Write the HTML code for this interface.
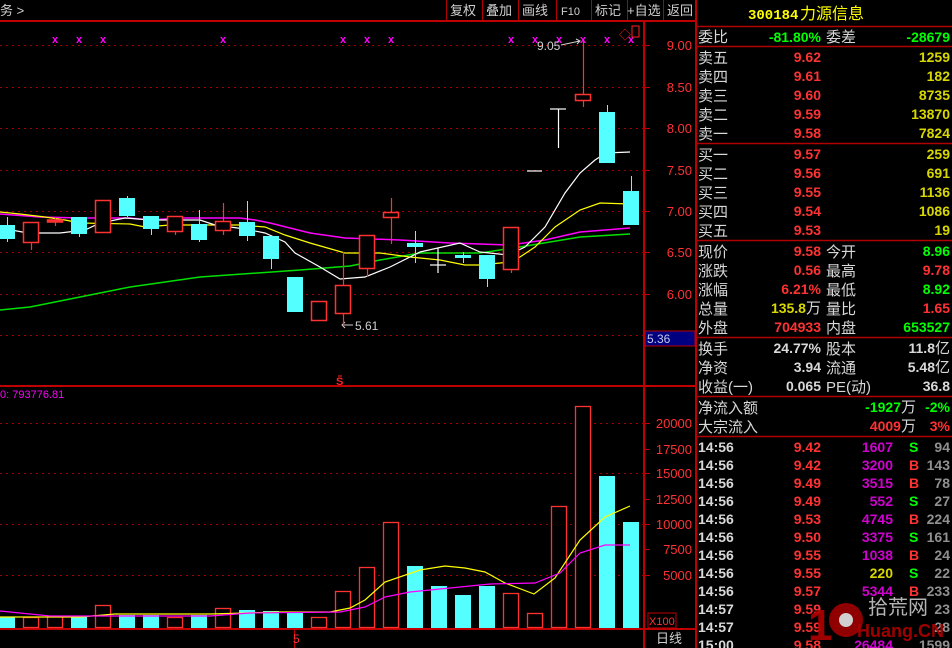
<!DOCTYPE html>
<html><head><meta charset="utf-8"><style>
html,body{margin:0;padding:0;background:#000;width:952px;height:648px;overflow:hidden}
svg{display:block}
text{font-family:"Liberation Sans","Noto Sans CJK SC",sans-serif}
.cj{font-family:"Liberation Sans","Noto Sans CJK SC",sans-serif;font-size:15px;fill:#d8d8d8}
.n{font-family:"Liberation Mono","Liberation Sans",monospace;font-weight:bold;font-size:14px}
.ax{font-family:"Liberation Sans",sans-serif;font-size:13px;fill:#ff3232}
</style></head><body>
<svg width="952" height="648" viewBox="0 0 952 648" xmlns="http://www.w3.org/2000/svg">
<rect width="952" height="648" fill="#000"/>
<text x="0" y="15" fill="#cfcfcf" font-size="13">务 &gt;</text>
<g stroke="#b00000" stroke-width="1">
<line x1="446.5" y1="0" x2="446.5" y2="20"/><line x1="482.5" y1="0" x2="482.5" y2="20"/><line x1="518.5" y1="0" x2="518.5" y2="20"/><line x1="556.5" y1="0" x2="556.5" y2="20"/><line x1="591.5" y1="0" x2="591.5" y2="20"/><line x1="627.5" y1="0" x2="627.5" y2="20"/><line x1="663.5" y1="0" x2="663.5" y2="20"/>
</g>
<g fill="#d0d0d0" font-size="13">
<text x="450" y="15">复权</text><text x="486" y="15">叠加</text><text x="522" y="15">画线</text><text x="561" y="15" font-size="11">F10</text><text x="595" y="15">标记</text><text x="627" y="15">+自选</text><text x="667" y="15">返回</text>
</g>
<g stroke="#c00000" stroke-width="2">
<line x1="0" y1="21" x2="696" y2="21"/>
<line x1="644" y1="21" x2="644" y2="648"/>
<line x1="0" y1="386" x2="696" y2="386"/>
<line x1="0" y1="629" x2="696" y2="629"/>
<line x1="696" y1="0" x2="696" y2="648"/>
</g>
<line x1="294.5" y1="629" x2="294.5" y2="648" stroke="#c00000"/>
<g stroke="#a00000" stroke-dasharray="2,4" stroke-width="1">
<line x1="0" y1="45.5" x2="644" y2="45.5"/><line x1="0" y1="87.5" x2="644" y2="87.5"/><line x1="0" y1="128.5" x2="644" y2="128.5"/><line x1="0" y1="170.5" x2="644" y2="170.5"/><line x1="0" y1="211.5" x2="644" y2="211.5"/><line x1="0" y1="252.5" x2="644" y2="252.5"/><line x1="0" y1="294.5" x2="644" y2="294.5"/><line x1="0" y1="335.5" x2="644" y2="335.5"/>
<line x1="0" y1="423.5" x2="644" y2="423.5"/><line x1="0" y1="473.5" x2="644" y2="473.5"/><line x1="0" y1="524.5" x2="644" y2="524.5"/><line x1="0" y1="575.5" x2="644" y2="575.5"/>
</g>
<g stroke="#c00000">
<line x1="644" y1="45.5" x2="650" y2="45.5"/><line x1="644" y1="87.5" x2="650" y2="87.5"/><line x1="644" y1="128.5" x2="650" y2="128.5"/><line x1="644" y1="170.5" x2="650" y2="170.5"/><line x1="644" y1="211.5" x2="650" y2="211.5"/><line x1="644" y1="252.5" x2="650" y2="252.5"/><line x1="644" y1="294.5" x2="650" y2="294.5"/>
<line x1="644" y1="423.5" x2="650" y2="423.5"/><line x1="644" y1="449.5" x2="650" y2="449.5"/><line x1="644" y1="473.5" x2="650" y2="473.5"/><line x1="644" y1="499.5" x2="650" y2="499.5"/><line x1="644" y1="524.5" x2="650" y2="524.5"/><line x1="644" y1="549.5" x2="650" y2="549.5"/><line x1="644" y1="575.5" x2="650" y2="575.5"/>
</g>
<g class="ax" text-anchor="end">
<text x="692" y="50">9.00</text><text x="692" y="92">8.50</text><text x="692" y="133">8.00</text><text x="692" y="175">7.50</text><text x="692" y="216">7.00</text><text x="692" y="257">6.50</text><text x="692" y="299">6.00</text>
<text x="692" y="428">20000</text><text x="692" y="454">17500</text><text x="692" y="478">15000</text><text x="692" y="504">12500</text><text x="692" y="529">10000</text><text x="692" y="554">7500</text><text x="692" y="580">5000</text>
</g>
<rect x="645" y="331" width="50" height="15" fill="#000080" stroke="#c00000"/>
<text x="647" y="343" fill="#c8c8e8" font-size="12">5.36</text>
<rect x="648" y="613" width="28" height="15" fill="none" stroke="#c00000"/>
<text x="649" y="625" fill="#ff3232" font-size="11">X100</text>
<text x="656" y="643" fill="#d0d0d0" font-size="13">日线</text>
<text x="293" y="643" fill="#ff3232" font-size="12">5</text>
<text x="336" y="385" fill="#ff2020" font-size="11" font-weight="bold">S</text>
<line x1="338" y1="376" x2="342" y2="376" stroke="#ff2020"/>
<text x="0" y="398" fill="#ff00ff" font-size="11">0: 793776.81</text>
<g fill="#ff00ff" font-size="11" font-weight="bold" text-anchor="middle">
<text x="55" y="43">x</text><text x="79" y="43">x</text><text x="103" y="43">x</text><text x="223" y="43">x</text><text x="343" y="43">x</text><text x="367" y="43">x</text><text x="391" y="43">x</text><text x="511" y="43">x</text><text x="535" y="43">x</text><text x="559" y="43">x</text><text x="583" y="43">x</text><text x="607" y="43">x</text><text x="631" y="43">x</text>
</g>
<text x="619" y="39" fill="#ff2020" font-size="12">◇</text>
<rect x="632" y="26" width="7" height="11" fill="none" stroke="#ff2020"/>
<text x="537" y="50" fill="#d0d0d0" font-size="12">9.05</text>
<path d="M561 45 L580 41 M576 39 L580 41 L577 44" stroke="#d0d0d0" fill="none"/>
<text x="355" y="330" fill="#d0d0d0" font-size="12">5.61</text>
<path d="M353 325 L342 325 M345 322 L342 325 L345 328" stroke="#d0d0d0" fill="none"/>
<polyline fill="none" stroke="#00e000" stroke-width="1.5" points="0,310 30,307 80,297 130,287 200,277 300,270 350,266 380,260 420,253 480,253 520,247 580,237 630,234"/>
<polyline fill="none" stroke="#ff00ff" stroke-width="1.5" points="0,214 40,217 80,218 130,218 150,220 180,218 240,218 255,220 270,223 310,233 345,238 400,240 450,243 510,245 545,240 580,232 630,228"/>
<polyline fill="none" stroke="#ffff00" stroke-width="1.2" points="0,212 20,214 45,217 65,220 80,223 130,224 145,227 170,225 240,225 265,227 285,235 310,243 345,253 380,253 410,257 440,260 465,265 480,265 510,262 520,257 535,247 555,227 580,210 600,203 630,204"/>
<polyline fill="none" stroke="#ffffff" stroke-width="1.2" points="0,228 28,233 60,233 85,230 100,223 125,218 150,220 200,220 215,225 245,229 265,233 285,242 295,253 320,267 340,279 365,277 390,267 420,252 460,243 480,252 508,255 525,247 545,227 565,193 580,173 595,160 606,153 630,152"/>
<g stroke="#54ffff" stroke-width="1">
<line x1="7.5" y1="217" x2="7.5" y2="242"/><line x1="79.5" y1="217" x2="79.5" y2="237"/><line x1="127.5" y1="196" x2="127.5" y2="217"/><line x1="151.5" y1="216" x2="151.5" y2="235"/><line x1="199.5" y1="210" x2="199.5" y2="242"/><line x1="247.5" y1="201" x2="247.5" y2="241"/><line x1="271.5" y1="236" x2="271.5" y2="269"/><line x1="415.5" y1="231" x2="415.5" y2="263"/><line x1="463.5" y1="252" x2="463.5" y2="263"/><line x1="487.5" y1="255" x2="487.5" y2="287"/><line x1="607.5" y1="105" x2="607.5" y2="113"/><line x1="631.5" y1="176" x2="631.5" y2="191"/>
</g>
<g fill="#54ffff">
<rect x="-1" y="225" width="16" height="14"/><rect x="71" y="217" width="16" height="17"/><rect x="119" y="198" width="16" height="18"/><rect x="143" y="216" width="16" height="13"/><rect x="191" y="224" width="16" height="16"/><rect x="239" y="222" width="16" height="14"/><rect x="263" y="236" width="16" height="23"/><rect x="287" y="277" width="16" height="35"/><rect x="407" y="243" width="16" height="4"/><rect x="455" y="255" width="16" height="3"/><rect x="479" y="255" width="16" height="24"/><rect x="599" y="112" width="16" height="51"/><rect x="623" y="191" width="16" height="34"/>
</g>
<g stroke="#ff3232" stroke-width="1.2">
<line x1="31.5" y1="242" x2="31.5" y2="250"/><line x1="55.5" y1="218" x2="55.5" y2="226"/><line x1="175.5" y1="231" x2="175.5" y2="235"/><line x1="223.5" y1="203" x2="223.5" y2="235"/><line x1="343.5" y1="252" x2="343.5" y2="326"/><line x1="367.5" y1="268" x2="367.5" y2="277"/><line x1="391.5" y1="198" x2="391.5" y2="244"/><line x1="511.5" y1="269" x2="511.5" y2="273"/><line x1="583.5" y1="40" x2="583.5" y2="107"/>
</g>
<g fill="#000" stroke="#ff3232" stroke-width="1.5">
<rect x="23.5" y="222.5" width="15" height="20"/><rect x="47.5" y="220" width="15" height="2" fill="#ff3232"/><rect x="95.5" y="200.5" width="15" height="32"/><rect x="167.5" y="216.5" width="15" height="15"/><rect x="215.5" y="221.5" width="15" height="9"/><rect x="311.5" y="301.5" width="15" height="19"/><rect x="335.5" y="285.5" width="15" height="28"/><rect x="359.5" y="235.5" width="15" height="33"/><rect x="383.5" y="212.5" width="15" height="5"/><rect x="503.5" y="227.5" width="15" height="42"/><rect x="575.5" y="94.5" width="15" height="6"/>
</g>
<g stroke="#fff" stroke-width="1.2">
<line x1="430" y1="265" x2="446" y2="265"/><line x1="438" y1="248" x2="438" y2="273"/>
<line x1="527" y1="171" x2="542" y2="171"/>
<line x1="550" y1="109" x2="566" y2="109"/><line x1="558.5" y1="109" x2="558.5" y2="148"/>
</g>
<g fill="#54ffff">
<rect x="-1" y="617" width="16" height="11"/><rect x="71" y="617" width="16" height="11"/><rect x="119" y="615" width="16" height="13"/><rect x="143" y="615" width="16" height="13"/><rect x="191" y="615" width="16" height="13"/><rect x="239" y="610" width="16" height="18"/><rect x="263" y="611" width="16" height="17"/><rect x="287" y="613" width="16" height="15"/><rect x="407" y="566" width="16" height="62"/><rect x="431" y="586" width="16" height="42"/><rect x="455" y="595" width="16" height="33"/><rect x="479" y="586" width="16" height="42"/><rect x="599" y="476" width="16" height="152"/><rect x="623" y="522" width="16" height="106"/>
</g>
<g fill="#000" stroke="#ff3232" stroke-width="1.3">
<rect x="23.5" y="617.5" width="15" height="10"/><rect x="47.5" y="616.5" width="15" height="11"/><rect x="95.5" y="605.5" width="15" height="22"/><rect x="167.5" y="617.5" width="15" height="10"/><rect x="215.5" y="608.5" width="15" height="19"/><rect x="311.5" y="617.5" width="15" height="10"/><rect x="335.5" y="591.5" width="15" height="36"/><rect x="359.5" y="567.5" width="15" height="60"/><rect x="383.5" y="522.5" width="15" height="105"/><rect x="503.5" y="593.5" width="15" height="34"/><rect x="527.5" y="613.5" width="15" height="14"/><rect x="551.5" y="506.5" width="15" height="121"/><rect x="575.5" y="406.5" width="15" height="221"/>
</g>
<polyline fill="none" stroke="#ffff00" stroke-width="1.2" points="0,617 80,617 115,614 210,614 280,612 330,612 350,608 365,600 385,582 420,570 445,566 465,568 485,572 505,583 534,594 555,578 580,540 605,517 630,506"/>
<polyline fill="none" stroke="#ff00ff" stroke-width="1.2" points="0,611 50,616 210,616 250,613 340,612 365,607 385,597 410,592 450,588 490,584 535,583 560,573 580,553 605,545 630,545"/>
<g stroke="#b00000" stroke-width="1.5">
<line x1="696" y1="26.5" x2="952" y2="26.5"/><line x1="696" y1="46.5" x2="952" y2="46.5"/><line x1="696" y1="143.5" x2="952" y2="143.5"/><line x1="696" y1="240.5" x2="952" y2="240.5"/><line x1="696" y1="337.5" x2="952" y2="337.5"/><line x1="696" y1="396.5" x2="952" y2="396.5"/><line x1="696" y1="436.5" x2="952" y2="436.5"/>
</g>
<text x="748" y="19" fill="#ffff00" class="n" font-size="14">300184</text>
<text x="800" y="19" fill="#ffff00" font-size="16">力源信息</text>
<g class="cj">
<text x="698" y="42">委比</text><text x="826" y="42">委差</text>
<text x="698" y="63">卖五</text><text x="698" y="82">卖四</text><text x="698" y="101">卖三</text><text x="698" y="120">卖二</text><text x="698" y="139">卖一</text>
<text x="698" y="160">买一</text><text x="698" y="179">买二</text><text x="698" y="198">买三</text><text x="698" y="217">买四</text><text x="698" y="236">买五</text>
<text x="698" y="257">现价</text><text x="826" y="257">今开</text>
<text x="698" y="276">涨跌</text><text x="826" y="276">最高</text>
<text x="698" y="295">涨幅</text><text x="826" y="295">最低</text>
<text x="698" y="314">总量</text><text x="826" y="314">量比</text>
<text x="698" y="333">外盘</text><text x="826" y="333">内盘</text>
<text x="698" y="354">换手</text><text x="826" y="354">股本</text>
<text x="698" y="373">净资</text><text x="826" y="373">流通</text>
<text x="698" y="392">收益(一)</text><text x="826" y="392">PE(动)</text>
<text x="698" y="413">净流入额</text><text x="698" y="432">大宗流入</text>
</g>
<g class="n" text-anchor="end">
<text x="821" y="42" fill="#00ff00">-81.80%</text><text x="950" y="42" fill="#00ff00">-28679</text>
<g fill="#ff3232"><text x="821" y="62">9.62</text><text x="821" y="81">9.61</text><text x="821" y="100">9.60</text><text x="821" y="119">9.59</text><text x="821" y="138">9.58</text><text x="821" y="159">9.57</text><text x="821" y="178">9.56</text><text x="821" y="197">9.55</text><text x="821" y="216">9.54</text><text x="821" y="235">9.53</text></g>
<g fill="#d8d800"><text x="950" y="62">1259</text><text x="950" y="81">182</text><text x="950" y="100">8735</text><text x="950" y="119">13870</text><text x="950" y="138">7824</text><text x="950" y="159">259</text><text x="950" y="178">691</text><text x="950" y="197">1136</text><text x="950" y="216">1086</text><text x="950" y="235">19</text></g>
<text x="821" y="256" fill="#ff3232">9.58</text><text x="950" y="256" fill="#00ff00">8.96</text>
<text x="821" y="275" fill="#ff3232">0.56</text><text x="950" y="275" fill="#ff3232">9.78</text>
<text x="821" y="294" fill="#ff3232">6.21%</text><text x="950" y="294" fill="#00ff00">8.92</text>
<text x="821" y="313" fill="#d8d800">135.8<tspan class="cj" fill="#d8d800" font-weight="normal">万</tspan></text><text x="950" y="313" fill="#ff3232">1.65</text>
<text x="821" y="332" fill="#ff3232">704933</text><text x="950" y="332" fill="#00ff00">653527</text>
<text x="821" y="353" fill="#d8d8d8">24.77%</text><text x="950" y="353" fill="#d8d8d8">11.8<tspan class="cj" font-weight="normal">亿</tspan></text>
<text x="821" y="372" fill="#d8d8d8">3.94</text><text x="950" y="372" fill="#d8d8d8">5.48<tspan class="cj" font-weight="normal">亿</tspan></text>
<text x="821" y="391" fill="#d8d8d8">0.065</text><text x="950" y="391" fill="#d8d8d8">36.8</text>
<text x="916" y="412" fill="#00ff00">-1927<tspan class="cj" fill="#00ff00" font-weight="normal">万</tspan></text><text x="950" y="412" fill="#00ff00">-2%</text>
<text x="916" y="431" fill="#ff3232">4009<tspan class="cj" fill="#ff3232" font-weight="normal">万</tspan></text><text x="950" y="431" fill="#ff3232">3%</text>
</g>
<g class="n">
<g fill="#d8d8d8"><text x="698" y="452">14:56</text><text x="698" y="470">14:56</text><text x="698" y="488">14:56</text><text x="698" y="506">14:56</text><text x="698" y="524">14:56</text><text x="698" y="542">14:56</text><text x="698" y="560">14:56</text><text x="698" y="578">14:56</text><text x="698" y="596">14:56</text><text x="698" y="614">14:57</text><text x="698" y="632">14:57</text><text x="698" y="650">15:00</text></g>
<g fill="#ff3232" text-anchor="end"><text x="821" y="452">9.42</text><text x="821" y="470">9.42</text><text x="821" y="488">9.49</text><text x="821" y="506">9.49</text><text x="821" y="524">9.53</text><text x="821" y="542">9.50</text><text x="821" y="560">9.55</text><text x="821" y="578">9.55</text><text x="821" y="596">9.57</text><text x="821" y="614">9.59</text><text x="821" y="632">9.59</text><text x="821" y="650">9.58</text></g>
<g fill="#d000d0" text-anchor="end"><text x="893" y="452">1607</text><text x="893" y="470">3200</text><text x="893" y="488">3515</text><text x="893" y="506">552</text><text x="893" y="524">4745</text><text x="893" y="542">3375</text><text x="893" y="560">1038</text><text x="893" y="578" fill="#d8d800">220</text><text x="893" y="596">5344</text><text x="893" y="650">26484</text></g>
<g><text x="909" y="452" fill="#00ff00">S</text><text x="909" y="470" fill="#ff3232">B</text><text x="909" y="488" fill="#ff3232">B</text><text x="909" y="506" fill="#00ff00">S</text><text x="909" y="524" fill="#ff3232">B</text><text x="909" y="542" fill="#00ff00">S</text><text x="909" y="560" fill="#ff3232">B</text><text x="909" y="578" fill="#00ff00">S</text><text x="909" y="596" fill="#ff3232">B</text></g>
<g fill="#909090" text-anchor="end"><text x="950" y="452">94</text><text x="950" y="470">143</text><text x="950" y="488">78</text><text x="950" y="506">27</text><text x="950" y="524">224</text><text x="950" y="542">161</text><text x="950" y="560">24</text><text x="950" y="578">22</text><text x="950" y="596">233</text><text x="950" y="614">23</text><text x="950" y="632">28</text><text x="950" y="650">1599</text></g>
</g>
<text x="808" y="640" fill="#b00000" font-size="44" font-weight="bold" opacity="0.9">1</text>
<circle cx="846" cy="620" r="17" fill="#a00000" opacity="0.9"/>
<circle cx="846" cy="620" r="7" fill="#d0d0d0"/>
<text x="868" y="614" fill="#c8c8c8" font-size="20" opacity="0.9">拾荒网</text>
<text x="857" y="637" fill="#b00000" font-size="18" font-weight="bold" opacity="0.9">Huang.CN</text>
</svg>
</body></html>
